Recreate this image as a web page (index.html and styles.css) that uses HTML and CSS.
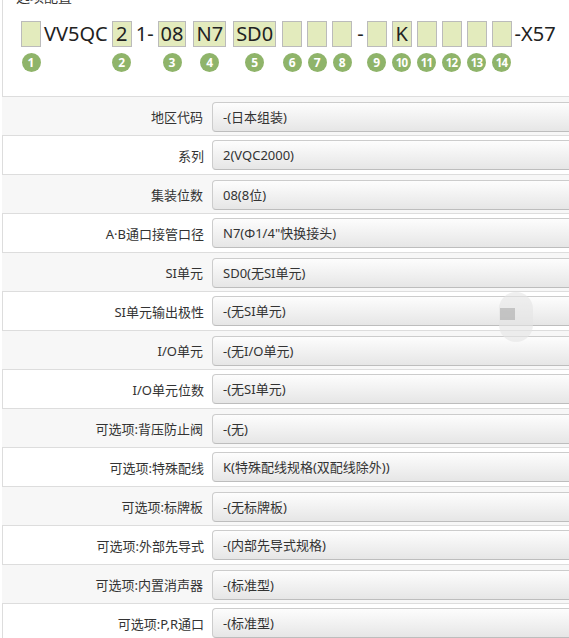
FILE: index.html
```html
<!DOCTYPE html>
<html lang="zh">
<head>
<meta charset="utf-8">
<link rel="stylesheet" href="styles.css">
</head>
<body>
<div class="wrap">
  <div class="top">
    <div class="title">选项配置</div>
    <div class="code">
      <div class="seg"><div class="box"></div><div class="num">1</div></div>
      <div class="txt">VV5QC</div>
      <div class="seg filled"><div class="box">2</div><div class="num">2</div></div>
      <div class="txt">1-</div>
      <div class="seg filled"><div class="box">08</div><div class="num">3</div></div>
      <div class="seg filled"><div class="box">N7</div><div class="num">4</div></div>
      <div class="seg filled"><div class="box">SD0</div><div class="num">5</div></div>
      <div class="seg"><div class="box"></div><div class="num">6</div></div>
      <div class="seg"><div class="box"></div><div class="num">7</div></div>
      <div class="seg"><div class="box"></div><div class="num">8</div></div>
      <div class="txt dash">-</div>
      <div class="seg"><div class="box"></div><div class="num">9</div></div>
      <div class="seg"><div class="box">K</div><div class="num two">10</div></div>
      <div class="seg"><div class="box"></div><div class="num two">11</div></div>
      <div class="seg"><div class="box"></div><div class="num two">12</div></div>
      <div class="seg"><div class="box"></div><div class="num two">13</div></div>
      <div class="seg"><div class="box"></div><div class="num two">14</div></div>
      <div class="txt">-X57</div>
    </div>
  </div>
  <div class="rows">
    <div class="row grey"><div class="label">地区代码</div><div class="sel">-(日本组装)</div></div>
    <div class="row white"><div class="label">系列</div><div class="sel">2(VQC2000)</div></div>
    <div class="row grey"><div class="label">集装位数</div><div class="sel">08(8位)</div></div>
    <div class="row white"><div class="label">A·B通口接管口径</div><div class="sel">N7(Φ1/4"快换接头)</div></div>
    <div class="row grey"><div class="label">SI单元</div><div class="sel">SD0(无SI单元)</div></div>
    <div class="row white"><div class="label">SI单元输出极性</div><div class="sel">-(无SI单元)</div></div>
    <div class="row grey"><div class="label">I/O单元</div><div class="sel">-(无I/O单元)</div></div>
    <div class="row white"><div class="label">I/O单元位数</div><div class="sel">-(无SI单元)</div></div>
    <div class="row grey"><div class="label">可选项:背压防止阀</div><div class="sel">-(无)</div></div>
    <div class="row white"><div class="label">可选项:特殊配线</div><div class="sel">K(特殊配线规格(双配线除外))</div></div>
    <div class="row grey"><div class="label">可选项:标牌板</div><div class="sel">-(无标牌板)</div></div>
    <div class="row white"><div class="label">可选项:外部先导式</div><div class="sel">-(内部先导式规格)</div></div>
    <div class="row grey"><div class="label">可选项:内置消声器</div><div class="sel">-(标准型)</div></div>
    <div class="row white"><div class="label">可选项:P,R通口</div><div class="sel">-(标准型)</div></div>
  </div>
</div>
<div class="blob"><div class="blob-sq"></div></div>
</body>
</html>
```

FILE: styles.css
```css
html, body {
  margin: 0;
  padding: 0;
  overflow: hidden;
  background: #fff;
}
body {
  font-family: "Noto Sans", "Noto Sans CJK SC", sans-serif;
  color: #333;
  width: 569px;
  height: 638px;
  position: relative;
}
.wrap {
  margin-left: 2px;
  width: 640px;
}
.top {
  box-sizing: border-box;
  margin-top: -16px;
  height: 113px;
  border: 1px solid #ddd;
  border-top: none;
}
.title {
  padding-left: 13px;
  padding-top: 4px;
  font-size: 14px;
  line-height: 18px;
  color: #333;
}
.code {
  display: flex;
  align-items: flex-start;
  gap: 5px;
  margin-top: 15px;
  padding-left: 18px;
}
.seg {
  display: flex;
  flex-direction: column;
  align-items: center;
}
.seg.filled {
  margin: 0 1px;
}
.box {
  box-sizing: border-box;
  min-width: 20px;
  height: 26px;
  padding: 0 2px;
  background: #e3ebbd;
  border: 1px solid #bbb;
  font-size: 20px;
  line-height: 24px;
  color: #222;
  text-align: center;
}
.txt {
  font-size: 20px;
  line-height: 26px;
  color: #222;
  margin: 0 -2px;
}
.txt.dash {
  margin: 0 -2px 0 0;
}
.num {
  margin-top: 6px;
  width: 19px;
  height: 19px;
  border-radius: 50%;
  background: #8fb46a;
  color: #fff;
  font-weight: bold;
  font-size: 12px;
  line-height: 19px;
  text-align: center;
}
.num.two {
  letter-spacing: -0.6px;
  font-size: 11.5px;
}
.rows {
  display: flex;
  flex-direction: column;
}
.row {
  box-sizing: border-box;
  display: flex;
  align-items: center;
  font-size: 13px;
}
.row.grey {
  height: 39px;
  background: #f7f7f7;
}
.row.white {
  height: 40px;
  margin-top: -1px;
  background: #fff;
  border: 1px solid #ddd;
}
.label {
  box-sizing: border-box;
  width: 201px;
  text-align: right;
  flex: none;
}
.sel {
  box-sizing: border-box;
  margin-left: 9px;
  flex: 1;
  height: 30px;
  line-height: 28px;
  padding-left: 10px;
  border: 1px solid #ccc;
  border-bottom-color: #bdbdbd;
  border-radius: 4px;
  background: linear-gradient(to bottom, #fdfdfd, #e6e6e6);
  color: #333;
}
.row.white .sel {
  margin-left: 8px;
}
.blob {
  position: absolute;
  left: 499px;
  top: 292px;
  width: 34px;
  height: 50px;
  border-radius: 17px;
  background: rgba(228, 228, 228, 0.6);
}
.blob-sq {
  position: absolute;
  left: 1px;
  top: 16px;
  width: 15px;
  height: 12px;
  background: rgba(170, 170, 170, 0.6);
}
```
